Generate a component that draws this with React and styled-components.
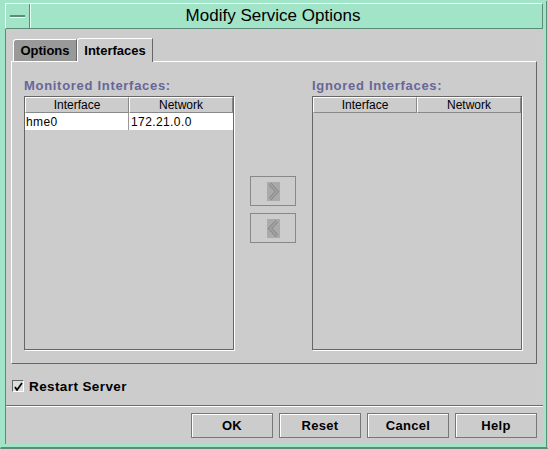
import React from "react";
import styled, { createGlobalStyle } from "styled-components";

const GlobalStyle = createGlobalStyle`
  html, body {
    margin: 0;
    padding: 0;
    background: #ffffff;
  }
  body {
    font-family: "Liberation Sans", Arial, sans-serif;
  }
`;

const monitored = [{ iface: "hme0", network: "172.21.0.0" }];
const ignored = [];

export default function App() {
  return (
    <>
      <GlobalStyle />
      <Window>
        <TitleBar>
          <MenuButton>
            <MenuDash />
          </MenuButton>
          <Title>Modify Service Options</Title>
        </TitleBar>
        <Body>
          <TabRow>
            <Tab width={64}>Options</Tab>
            <Tab width={76} active>
              Interfaces
            </Tab>
          </TabRow>
          <TabPanel>
            <ListColumn>
              <GroupLabel>Monitored Interfaces:</GroupLabel>
              <InterfaceTable rows={monitored} />
            </ListColumn>
            <ArrowColumn>
              <ArrowButton>
                <ArrowIcon direction="right" />
              </ArrowButton>
              <ArrowButton>
                <ArrowIcon direction="left" />
              </ArrowButton>
            </ArrowColumn>
            <ListColumn>
              <GroupLabel>Ignored Interfaces:</GroupLabel>
              <InterfaceTable rows={ignored} />
            </ListColumn>
          </TabPanel>
          <CheckRow>
            <CheckBox>
              <svg width="9" height="9" viewBox="0 0 9 9">
                <path d="M1 5 L3 8 L8 1" stroke="#000" strokeWidth="1.7" fill="none" />
              </svg>
            </CheckBox>
            <CheckLabel>Restart Server</CheckLabel>
          </CheckRow>
          <Separator />
          <ButtonRow>
            <DialogButton>OK</DialogButton>
            <DialogButton>Reset</DialogButton>
            <DialogButton>Cancel</DialogButton>
            <DialogButton>Help</DialogButton>
          </ButtonRow>
        </Body>
      </Window>
    </>
  );
}

function InterfaceTable({ rows }) {
  return (
    <Table>
      <HeaderRow>
        <HeaderCell>Interface</HeaderCell>
        <HeaderCell>Network</HeaderCell>
      </HeaderRow>
      {rows.map((row) => (
        <DataRow key={row.iface}>
          <DataCell>{row.iface}</DataCell>
          <DataCell>{row.network}</DataCell>
        </DataRow>
      ))}
    </Table>
  );
}

function ArrowIcon({ direction }) {
  const d = direction === "right" ? "M3 2 L10 9.5 L3 17" : "M10 2 L3 9.5 L10 17";
  return (
    <IconBox>
      <svg width="13" height="19" viewBox="0 0 13 19">
        <path d={d} stroke="#8a8a8a" strokeWidth="3.4" fill="none" strokeLinejoin="miter" />
        <path d={d} stroke="#a6a6a6" strokeWidth="1.4" fill="none" strokeLinejoin="miter" />
      </svg>
    </IconBox>
  );
}

const Window = styled.div`
  width: 548px;
  height: 449px;
  box-sizing: border-box;
  display: flex;
  flex-direction: column;
  background: #a2e4c8;
  border: 1px solid #a2e4c8;
  border-bottom: 2px solid #5c8c78;
  padding: 2px 4px 3px 4px;
  box-shadow: inset -1px 0 0 #5c8c78;
`;

const TitleBar = styled.div`
  height: 26px;
  display: flex;
  align-items: center;
  border-top: 1px solid #e8fff4;
  border-left: 1px solid #e8fff4;
  border-bottom: 1px solid #5c8c78;
  border-right: 1px solid #5c8c78;
  box-sizing: border-box;
`;

const MenuButton = styled.div`
  width: 23px;
  height: 100%;
  display: flex;
  align-items: center;
  justify-content: center;
  border-right: 1px solid #5c8c78;
  box-shadow: 1px 0 0 #e8fff4;
`;

const MenuDash = styled.div`
  width: 15px;
  height: 2px;
  background: #5c8c78;
  border-bottom: 1px solid #e8fff4;
`;

const Title = styled.div`
  flex: 1;
  text-align: center;
  font-family: "Liberation Sans", Arial, sans-serif;
  font-size: 17px;
  color: #000;
  padding-right: 26px;
`;

const Body = styled.div`
  flex: 1;
  background: #cccccc;
  display: flex;
  flex-direction: column;
  padding: 9px 6px 0 5px;
  border-left: 1px solid #5c8c78;
`;

const TabRow = styled.div`
  display: flex;
  align-items: flex-end;
  height: 23px;
  padding-left: 2px;
`;

const Tab = styled.div`
  width: ${(p) => p.width}px;
  height: ${(p) => (p.active ? "24px" : "22px")};
  box-sizing: border-box;
  display: flex;
  align-items: center;
  justify-content: center;
  font-size: 13px;
  font-weight: bold;
  color: #000;
  background: ${(p) => (p.active ? "#cccccc" : "#999999")};
  border-top: 1px solid #ffffff;
  border-left: 1px solid #ffffff;
  border-right: 1px solid #666666;
  border-top-left-radius: 3px;
  margin-bottom: ${(p) => (p.active ? "-1px" : "0")};
  position: relative;
  z-index: ${(p) => (p.active ? 2 : 1)};
`;

const TabPanel = styled.div`
  height: 303px;
  box-sizing: border-box;
  display: flex;
  padding: 12px 13px 13px 12px;
  border-top: 1px solid #ffffff;
  border-left: 1px solid #ffffff;
  border-right: 1px solid #666666;
  border-bottom: 1px solid #666666;
`;

const ListColumn = styled.div`
  display: flex;
  flex-direction: column;
  width: 211px;
`;

const GroupLabel = styled.div`
  height: 22px;
  display: flex;
  align-items: center;
  font-size: 13px;
  font-weight: bold;
  color: #666699;
  letter-spacing: 0.7px;
`;

const Table = styled.div`
  flex: 1;
  border: 1px solid #666666;
  box-shadow: 1px 1px 0 #ffffff;
  background: #cccccc;
  margin-right: 1px;
`;

const HeaderRow = styled.div`
  display: flex;
  height: 16px;
`;

const HeaderCell = styled.div`
  flex: 1;
  box-sizing: border-box;
  display: flex;
  align-items: center;
  justify-content: center;
  font-size: 12px;
  color: #000;
  border-top: 1px solid #ffffff;
  border-left: 1px solid #ffffff;
  border-right: 1px solid #888888;
  border-bottom: 1px solid #888888;
`;

const DataRow = styled.div`
  display: flex;
  height: 17px;
  background: #ffffff;
`;

const DataCell = styled.div`
  flex: 1;
  box-sizing: border-box;
  display: flex;
  align-items: center;
  padding-left: 1px;
  font-size: 12px;
  color: #000;
  letter-spacing: 0.4px;
  & + & {
    border-left: 1px solid #999999;
    padding-left: 2px;
  }
`;

const ArrowColumn = styled.div`
  flex: 1;
  display: flex;
  flex-direction: column;
  align-items: center;
  padding-top: 102px;
  gap: 7px;
`;

const ArrowButton = styled.div`
  width: 46px;
  height: 30px;
  box-sizing: border-box;
  border: 1px solid #888888;
  display: flex;
  align-items: center;
  justify-content: center;
  padding-left: 2px;
  margin-right: 2px;
`;

const IconBox = styled.div`
  width: 13px;
  height: 19px;
  background: #aaaaaa;
  display: flex;
`;

const CheckRow = styled.div`
  display: flex;
  align-items: center;
  gap: 5px;
  height: 18px;
  margin-top: 13px;
  padding-left: 1px;
`;

const CheckBox = styled.div`
  width: 12px;
  height: 12px;
  box-sizing: border-box;
  border-top: 1px solid #666666;
  border-left: 1px solid #666666;
  border-right: 1px solid #ffffff;
  border-bottom: 1px solid #ffffff;
  background: #dddddd;
  display: flex;
  align-items: center;
  justify-content: center;
`;

const CheckLabel = styled.div`
  font-size: 13.5px;
  font-weight: bold;
  color: #000;
  letter-spacing: 0.4px;
`;

const Separator = styled.div`
  margin: 10px -6px 0 -5px;
  border-top: 1px solid #666699;
  border-bottom: 1px solid #ffffff;
`;

const ButtonRow = styled.div`
  display: flex;
  justify-content: flex-end;
  gap: 6px;
  margin-top: 6px;
`;

const DialogButton = styled.div`
  width: 82px;
  height: 25px;
  box-sizing: border-box;
  display: flex;
  align-items: center;
  justify-content: center;
  border: 1px solid #777777;
  box-shadow: inset 1px 1px 0 #ffffff;
  font-size: 13px;
  font-weight: bold;
  color: #000;
  letter-spacing: 0.3px;
`;
